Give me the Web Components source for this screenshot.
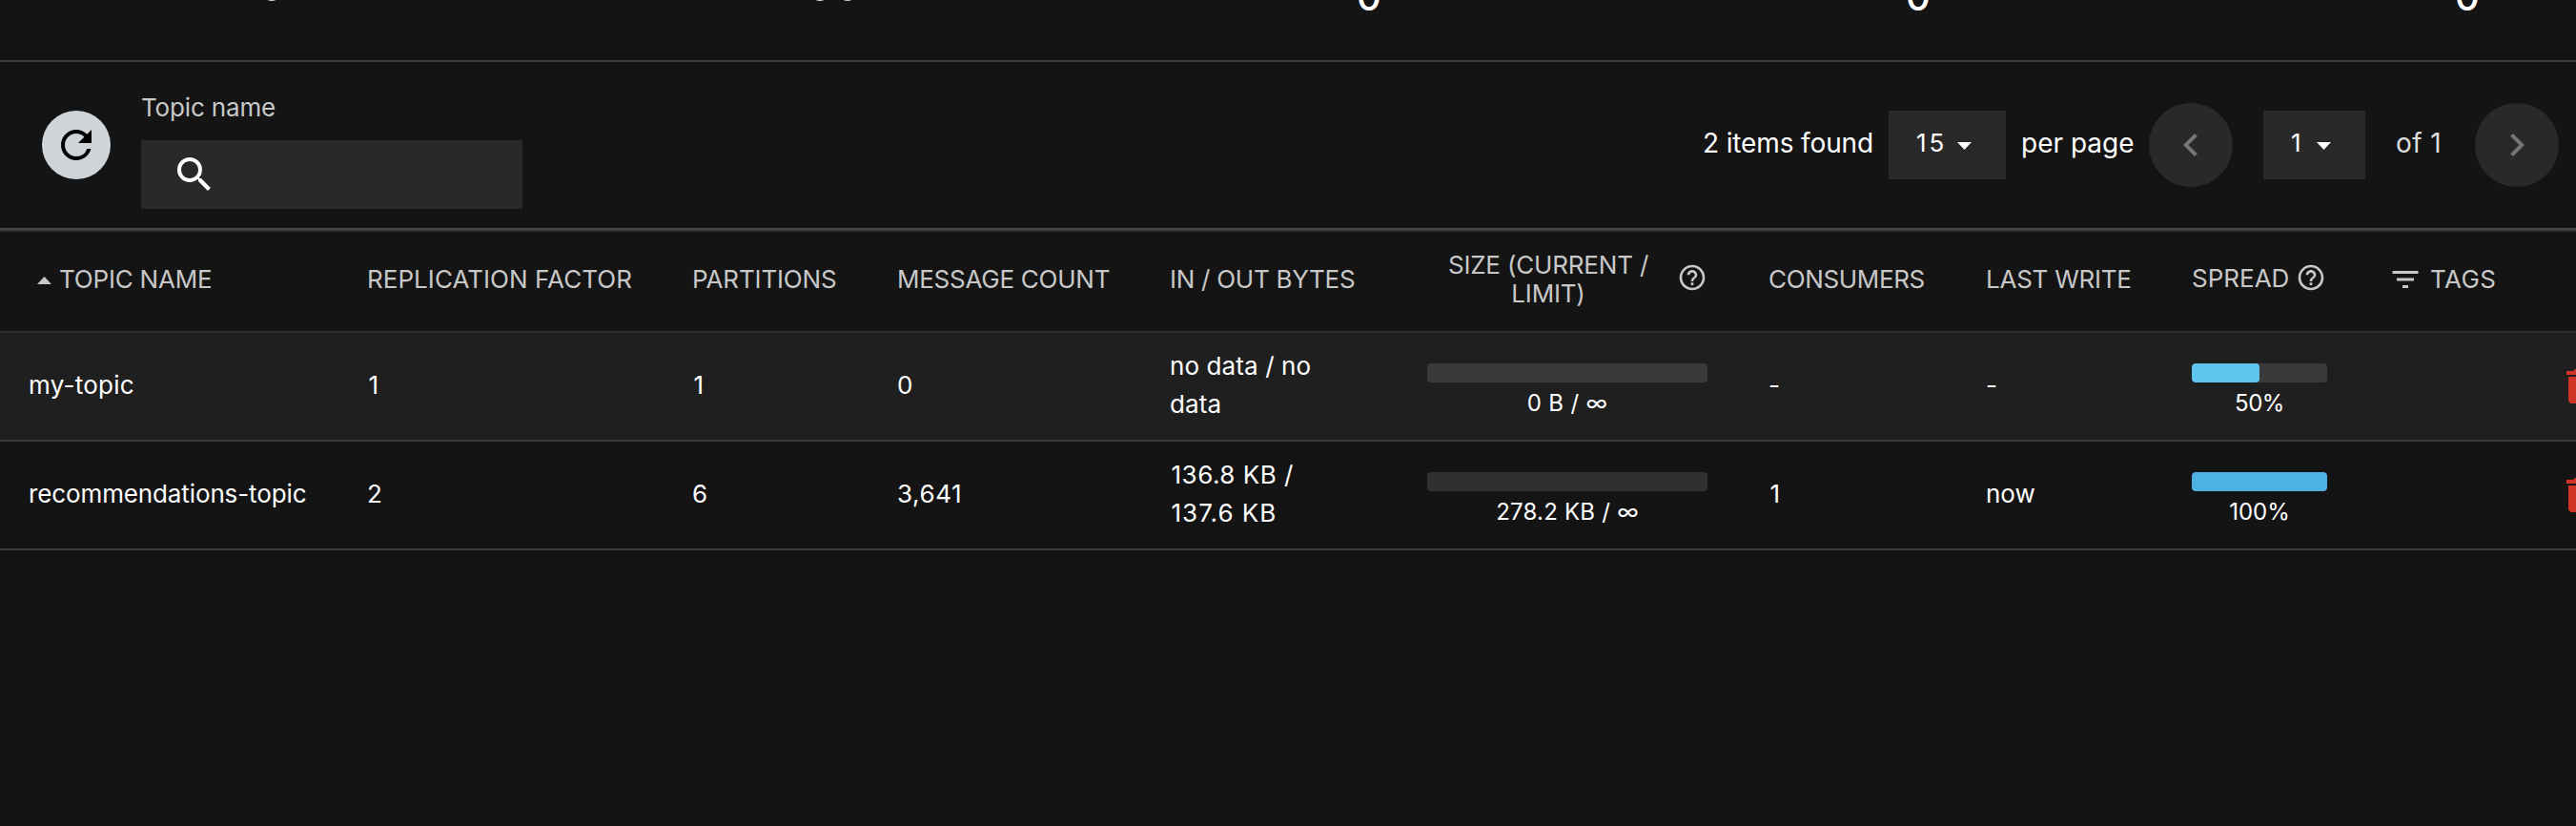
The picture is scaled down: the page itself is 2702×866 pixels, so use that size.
<!DOCTYPE html>
<html lang="en"><head><meta charset="utf-8"><title>Topics</title>
<style>html,body{margin:0;background:#141414;height:100%;overflow:hidden}body{font:26px/40px Inter,"Liberation Sans",sans-serif;color:#fff}</style>
</head><body>
<topics-page></topics-page>
<script>
const define = (name, html, setup) => {
  const t = document.createElement('template');
  t.innerHTML = html;
  customElements.define(name, class extends HTMLElement {
    connectedCallback() {
      if (this.shadowRoot) return;
      const root = this.attachShadow({mode: 'open'});
      root.append(t.content.cloneNode(true));
      if (setup) setup(this, root);
    }
  });
};

const ICONS = {
  refresh: 'M17.65 6.35A7.958 7.958 0 0 0 12 4c-4.42 0-7.99 3.58-7.99 8s3.57 8 7.99 8c3.73 0 6.84-2.55 7.73-6h-2.08A5.99 5.99 0 0 1 12 18c-3.31 0-6-2.69-6-6s2.69-6 6-6c1.66 0 3.14.69 4.22 1.78L13 11h7V4l-2.35 2.35z',
  search: 'M15.5 14h-.79l-.28-.27A6.471 6.471 0 0 0 16 9.5 6.5 6.5 0 1 0 9.5 16c1.61 0 3.09-.59 4.23-1.57l.27.28v.79l5 4.99L20.49 19l-4.99-5zm-6 0C7.01 14 5 11.99 5 9.5S7.01 5 9.5 5 14 7.01 14 9.5 11.99 14 9.5 14z',
  left: 'M15.41 7.41 14 6l-6 6 6 6 1.41-1.41L10.83 12z',
  right: 'M10 6 8.59 7.41 13.17 12l-4.58 4.59L10 18l6-6z',
  filter: 'M10 18h4v-2h-4v2zM3 6v2h18V6H3zm3 7h12v-2H6v2z',
  help: 'M11 18h2v-2h-2v2zm1-16C6.48 2 2 6.48 2 12s4.48 10 10 10 10-4.48 10-10S17.52 2 12 2zm0 18c-4.41 0-8-3.59-8-8s3.59-8 8-8 8 3.59 8 8-3.59 8-8 8zm0-14c-2.21 0-4 1.79-4 4h2c0-1.1.9-2 2-2s2 .9 2 2c0 2-3 1.75-3 5h2c0-2.25 3-2.5 3-5 0-2.21-1.79-4-4-4z',
  trash: 'M6 19c0 1.1.9 2 2 2h8c1.1 0 2-.9 2-2V7H6v12zM19 4h-3.5l-1-1h-5l-1 1H5v2h14V4z'
};
define('ui-icon', '<style>:host{display:block;flex:none;width:48px;height:48px}svg{display:block;width:100%;height:100%}</style><svg viewBox="0 0 24 24"><path fill="currentColor"/></svg>',
  (el, r) => r.querySelector('path').setAttribute('d', ICONS[el.getAttribute('name')]));

define('ui-caret', '<style>:host{display:block;flex:none;width:15px;height:8px;background:currentColor;clip-path:polygon(0 0,100% 0,50% 100%)}:host([up]){clip-path:polygon(50% 0,100% 100%,0 100%)}</style>');

define('round-button', '<style>:host{display:flex;flex:none;align-items:center;justify-content:center;border-radius:50%;width:88px;height:88px;background:#292929;color:#757575}:host([primary]){width:72px;height:72px;background:#cfd4d8;color:#000}</style><slot></slot>');

define('select-box', `<style>:host{display:flex;flex:none;box-sizing:border-box;height:72px;background:#292929;align-items:center;padding-left:29px}
span{padding-bottom:5px;width:var(--w);letter-spacing:var(--ls,0);white-space:nowrap}ui-caret{margin-top:2px}</style><span><slot></slot></span><ui-caret></ui-caret>`);

define('summary-strip', `<style>:host{display:grid;grid-template-columns:572px repeat(4,576px);height:63px;overflow:hidden;border-bottom:2px solid #3a3a3a;box-sizing:content-box}
b{font-weight:450;font-size:40px;line-height:48px;height:48px;margin-top:-27px;text-align:center}
div{display:flex;height:1px;gap:21px}i{width:8px;height:1px;background:linear-gradient(90deg,#444,#ccc 35%,#ccc 65%,#444)}
.a{padding-left:281px}.b{padding-left:284px}</style>
<div class="a"><i></i></div><div class="b"><i></i><i></i></div><b>0</b><b>0</b><b>0</b>`);

define('search-field', `<style>:host{display:block;width:400px}label{display:block;height:40px;color:#c8c8c8;letter-spacing:-.15px}
div{box-sizing:border-box;height:72px;margin-top:14px;background:#292929;padding:12px 0 0 32px}</style>
<label>Topic name</label><div><ui-icon name="search"></ui-icon></div>`);

define('table-toolbar', `<style>:host{display:flex;height:174px;border-bottom:2px solid #4a4a4a}
round-button[primary]{margin:51px 32px 0 44px}search-field{margin-top:28px}
nav{display:flex;align-items:center;height:174px;margin-left:1238px;font-size:28px}
.t{flex:none;padding-bottom:4px;white-space:nowrap}
select-box{font-size:26px}</style>
<round-button primary><ui-icon name="refresh"></ui-icon></round-button><search-field></search-field>
<nav><span class="t" style="width:195px;letter-spacing:-.13px">2 items found</span>
<select-box style="width:123px;--w:43px;--ls:3px">15</select-box>
<span class="t" style="width:134px;margin-left:16px">per page</span>
<round-button><ui-icon name="left"></ui-icon></round-button>
<select-box style="width:107px;--w:27px;margin-left:32px">1</select-box>
<span class="t" style="width:83px;margin-left:32px;color:#ddd;letter-spacing:.4px">of 1</span>
<round-button><ui-icon name="right"></ui-icon></round-button></nav>`);

define('usage-bar', `<style>:host{display:block;align-self:start;padding-top:32px;font-size:24px;text-align:center;--track:#3a3a3a}
div{height:20px;border-radius:4px;background:var(--track);overflow:hidden}i{display:block;height:20px;border-radius:4px;width:var(--v,0);background:var(--c)}
span{display:block;margin-top:2px;letter-spacing:var(--ls,0)}</style><div><i></i></div><span><slot></slot></span>`);

define('table-row', `<style>:host{display:grid;grid-template-columns:355px 341px 215px 286px 270px 294px 64px 228px 216px 142px 68px 173px 60px;padding-left:30px;height:112px;align-items:center;border-bottom:2px solid #3a3a3a}
:host([head]){height:104px;line-height:30px;color:#c8c8c8;border-top:2px solid #303030;border-bottom-color:#303030}
:host([shade]){background:#1f1f1f}
::slotted(.c){padding-bottom:3px;white-space:nowrap}
::slotted(.h){display:flex;align-items:center;padding-bottom:5px;white-space:nowrap}</style><slot></slot>`);

define('topics-page', `<style>:host{display:block;width:2702px;height:866px;overflow:hidden}
.g{grid-column:6}.n{grid-column:8}.s{grid-column:10}.f{grid-column:12}.x{grid-column:13;justify-self:start;color:#d13427}
.one{padding-left:1.5px}
ui-icon[name=help]{width:32px;height:32px}ui-icon[name=filter]{width:36px;height:36px}
.size span{width:217px;text-align:center;margin-left:19px;letter-spacing:-.18px}
</style>
<summary-strip></summary-strip><table-toolbar></table-toolbar>
<table-row head>
<div class="h" style="letter-spacing:-.2px"><ui-caret up style="margin:3px 8px 0 9px"></ui-caret>TOPIC NAME</div>
<div class="h" style="letter-spacing:.05px">REPLICATION FACTOR</div>
<div class="h" style="letter-spacing:-.15px">PARTITIONS</div>
<div class="h" style="letter-spacing:-.25px">MESSAGE COUNT</div>
<div class="h" style="letter-spacing:-.27px">IN / OUT BYTES</div>
<div class="h size g"><span>SIZE (CURRENT /<br>LIMIT)</span><ui-icon name="help" style="margin:-3px 0 0 27px"></ui-icon></div>
<div class="h n" style="letter-spacing:-.35px">CONSUMERS</div>
<div class="h" style="letter-spacing:-.25px">LAST WRITE</div>
<div class="h s"><span style="margin-top:-2px;width:109px">SPREAD</span><ui-icon name="help" style="margin-top:-3px"></ui-icon></div>
<div class="h f" style="letter-spacing:.4px;margin-left:-4px"><ui-icon name="filter" style="margin-right:8px"></ui-icon>TAGS</div>
</table-row>
<table-row shade>
<div class="c" style="letter-spacing:.25px">my-topic</div><div class="c one">1</div><div class="c one">1</div><div class="c">0</div>
<div class="c" style="letter-spacing:.1px">no data / no<br>data</div>
<usage-bar class="g" style="--ls:.3px">0 B / ∞</usage-bar>
<div class="c n">-</div><div class="c">-</div>
<usage-bar class="s" style="--v:71px;--c:#5ec5ed;--ls:-.5px">50%</usage-bar>
<ui-icon class="x" name="trash"></ui-icon>
</table-row>
<table-row>
<div class="c" style="letter-spacing:-.12px">recommendations-topic</div><div class="c">2</div><div class="c">6</div><div class="c" style="letter-spacing:.6px">3,641</div>
<div class="c one"><span style="letter-spacing:.5px">136.8 KB /</span><br><span style="letter-spacing:1px">137.6 KB</span></div>
<usage-bar class="g" style="--ls:.23px;--track:#303030">278.2 KB / ∞</usage-bar>
<div class="c n one">1</div><div class="c">now</div>
<usage-bar class="s" style="--v:100%;--c:#4eb1e3">100%</usage-bar>
<ui-icon class="x" name="trash"></ui-icon>
</table-row>`);
</script></body></html>
